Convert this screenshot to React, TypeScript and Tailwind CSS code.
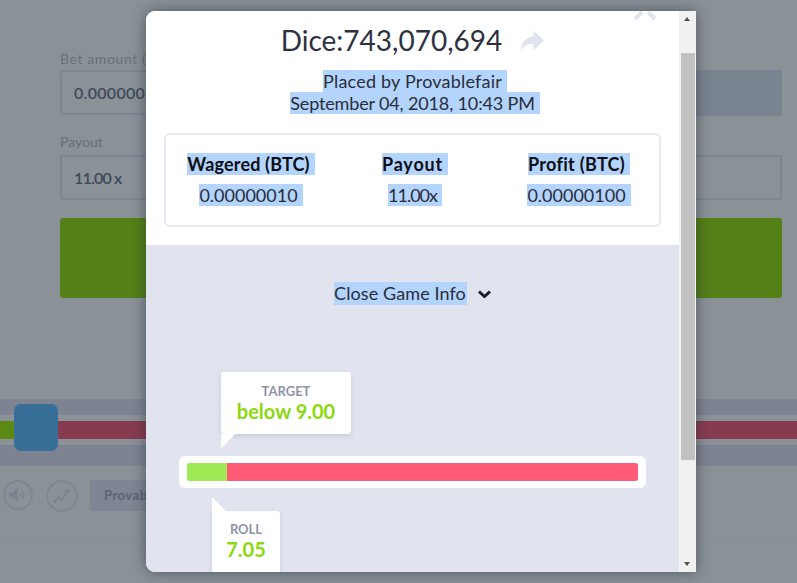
function Hl({ children, className = '' }: { children: React.ReactNode; className?: string }) {
  return <span className={`inline-block bg-[#b3d4fc] pr-[5px] ${className}`}>{children}</span>
}

function StatColumn({ label, value, labelClass, valueClass }: { label: string; value: string; labelClass: string; valueClass: string }) {
  return (
    <div className="flex flex-col items-center">
      <div className="h-[22px] text-[18px] leading-[22px] font-bold text-[#0d0f16]">
        <Hl className={labelClass}>{label}</Hl>
      </div>
      <div className="mt-[9px] h-[22px] text-[18px] leading-[22px]">
        <Hl className={valueClass}>{value}</Hl>
      </div>
    </div>
  )
}

function Backdrop() {
  return (
    <div className="h-full bg-[#8a9197] text-[#49535f]">
      {/* Bet form */}
      <div className="pt-[51px] pl-[60px] pr-[15px]">
        <div className="grid grid-cols-2 gap-[10px]">
          <div>
            <div className="h-[19px] text-[14px] leading-[15px] tracking-[0.6px] text-[#687079]">Bet amount (BTC)</div>
            <div className="flex h-[45px] items-center rounded-[3px] border-2 border-[#7d8692] pl-[12px] text-[16px] font-semibold tracking-[0.3px] text-[#3f4a5a]">
              0.00000010
            </div>
          </div>
          <div className="pt-[19px]">
            <div className="h-[46px] rounded-[3px] bg-[#7a8390]" />
          </div>
        </div>
        <div className="mt-[20px] grid grid-cols-2 gap-[10px]">
          <div>
            <div className="h-[19px] text-[14px] leading-[12px] text-[#687079]">Payout</div>
            <div className="flex h-[45px] items-center rounded-[3px] border-2 border-[#7d8692] pl-[12px] text-[16px] font-semibold tracking-[-0.8px] text-[#3f4a5a]">
              11.00 x
            </div>
          </div>
          <div className="pt-[19px]">
            <div className="h-[45px] rounded-[3px] border-2 border-[#7d8692]" />
          </div>
        </div>
        <div className="mt-[18px] h-[80px] rounded-[3px] bg-[#538017]" />
      </div>

      {/* Slider */}
      <div className="relative mt-[101px] flex h-[67px] flex-col">
        <div className="h-[16px] bg-[#7d8390]" />
        <div className="mt-[6px] flex h-[18px]">
          <div className="w-[14px] bg-[#5a8a12]" />
          <div className="flex-1 bg-[#873b50]" />
        </div>
        <div className="mt-[6px] h-[21px] bg-[#7d8390]" />
        <div className="absolute left-[14px] top-[5px] h-[47px] w-[44px] rounded-[7px] bg-[#376f99]" />
      </div>

      {/* Controls */}
      <div className="mt-[14px] flex h-[57px] items-start border-b border-[#868d94] pl-[3px]">
        <div className="flex h-[30px] w-[30px] items-center justify-center rounded-full border-2 border-[#7e8893]">
          <svg width="18" height="14" viewBox="0 0 18 14" fill="#7a8490">
            <path d="M0 4.500h3.500L9 0v14l-5.500-4.500H0z" />
            <path d="M11 4.500c1.500 1 1.500 4 0 5zM13.500 3c2.500 2 2.500 6 0 8l-.8-.8c1.800-1.700 1.800-4.700 0-6.400z" />
          </svg>
        </div>
        <div className="ml-[13px] flex h-[32px] w-[32px] items-center justify-center rounded-full border-2 border-[#7e8893]">
          <svg width="18" height="16" viewBox="0 0 18 16" fill="none" stroke="#7a8490" strokeWidth="2">
            <path d="M0.500 15L5.500 9l3 3 6-8.500" />
            <path d="M11 2.500l5-2 .5 5.500z" fill="#7a8490" stroke="none" />
          </svg>
        </div>
        <div className="ml-[12px] flex h-[31px] w-[150px] items-center rounded-[3px] bg-[#7d8692] pl-[14px] text-[13px] font-bold tracking-[0.5px] text-[#5b6572]">
          Provably Fair
        </div>
      </div>
    </div>
  )
}

function Modal() {
  return (
    <div className="absolute left-[146px] top-[11px] flex h-[561px] w-[550px] overflow-hidden rounded-l-[9px] bg-white text-[#2a2d3a] shadow-[0_0_14px_rgba(30,40,50,0.55)]">
      <div className="relative w-[533px] overflow-hidden">
        {/* Close icon, scrolled mostly out of view */}
        <svg className="absolute left-[487px] top-0" width="24" height="9" viewBox="0 0 24 9" fill="none" stroke="#e1e4ef" strokeWidth="4">
          <path d="M2 8L9 1" />
          <path d="M22 8L15 1" />
        </svg>

        {/* Summary */}
        <div className="h-[234px] bg-white px-[18px] pt-[12px]">
          <div className="relative flex h-[34px] items-center justify-center text-[28px] leading-[34px] text-[#2e3140]">
            <span className="mr-[19px]">Dice:743,070,694</span>
            <svg width="23" height="21" viewBox="0 0 24 21" fill="#e1e4ef">
              <path d="M24 10.500L13 0v6C5 7 0 13 0 21c3-5 7-7 13-7v7z" />
            </svg>
          </div>
          <div className="mt-[13px] flex flex-col items-center pl-[5px] text-[18px] leading-[22px]">
            <Hl className="tracking-[0.2px]">Placed by Provablefair</Hl>
            <Hl className="tracking-[-0.15px]">September 04, 2018, 10:43 PM</Hl>
          </div>
          <div className="mt-[19px] grid h-[94px] grid-cols-[repeat(3,164px)] rounded-[6px] border-2 border-[#e6e8f3] pl-[3px] pt-[18px]">
            <StatColumn label="Wagered (BTC)" value="0.00000010" labelClass="tracking-[0.15px]" valueClass="" />
            <StatColumn label="Payout" value="11.00x" labelClass="tracking-[0.8px]" valueClass="tracking-[-1px]" />
            <StatColumn label="Profit (BTC)" value="0.00000100" labelClass="tracking-[0.3px]" valueClass="" />
          </div>
        </div>

        {/* Game info */}
        <div className="h-[327px] bg-[#e1e4ef] px-[33px] pt-[37px]">
          <div className="flex h-[23px] items-center justify-center text-[18px] leading-[23px]">
            <span className="inline-block bg-[#b3d4fc] pr-[1px] tracking-[0.1px]">Close Game Info</span>
            <svg className="ml-[11px]" width="13" height="8" viewBox="0 0 13 8" fill="none" stroke="#1c1f2a" strokeWidth="3">
              <path d="M1 1.500l5.500 5 5.500-5" />
            </svg>
          </div>

          <div className="relative ml-[42px] mt-[67px] flex h-[62px] w-[130px] flex-col items-center rounded-[3px] bg-white pt-[12px] shadow-[0_2px_4px_rgba(120,125,160,0.25)]">
            <div className="text-[13px] leading-[15px] font-bold text-[#8e93a8]">TARGET</div>
            <div className="text-[20px] leading-[25px] font-bold text-[#8bd80f]">below 9.00</div>
            <div className="absolute left-0 top-[62px] h-0 w-0 border-r-[14px] border-t-[15px] border-r-transparent border-t-white" />
          </div>

          <div className="mt-[22px] flex h-[32px] rounded-[6px] bg-white px-[8px] py-[7px]">
            <div className="h-[18px] w-[40px] rounded-l-[2px] bg-[#9eea55]" />
            <div className="h-[18px] flex-1 rounded-r-[2px] bg-[#ff5a76]" />
          </div>

          <div className="relative ml-[33px] mt-[23px] flex h-[61px] w-[68px] flex-col items-center rounded-tr-[3px] bg-white pt-[11px] shadow-[0_2px_4px_rgba(120,125,160,0.25)]">
            <div className="text-[13px] leading-[15px] font-bold text-[#8e93a8]">ROLL</div>
            <div className="text-[20px] leading-[25px] font-bold text-[#8bd80f]">7.05</div>
            <div className="absolute bottom-full left-0 h-0 w-0 border-b-[14px] border-r-[14px] border-b-white border-r-transparent" />
          </div>
        </div>
      </div>

      {/* Scrollbar */}
      <div className="relative w-[17px] bg-[#f1f1f1]">
        <div className="absolute left-[5px] top-[6px] h-0 w-0 border-x-[3.500px] border-b-[4px] border-x-transparent border-b-[#505050]" />
        <div className="absolute left-[2px] top-[42px] h-[407px] w-[14px] bg-[#c1c1c1]" />
        <div className="absolute bottom-[6px] left-[5px] h-0 w-0 border-x-[3.500px] border-t-[4px] border-x-transparent border-t-[#505050]" />
      </div>
    </div>
  )
}

export default function App() {
  return (
    <div className="relative h-[583px] w-[797px] overflow-hidden font-['Lato',sans-serif]">
      <Backdrop />
      <Modal />
    </div>
  )
}
